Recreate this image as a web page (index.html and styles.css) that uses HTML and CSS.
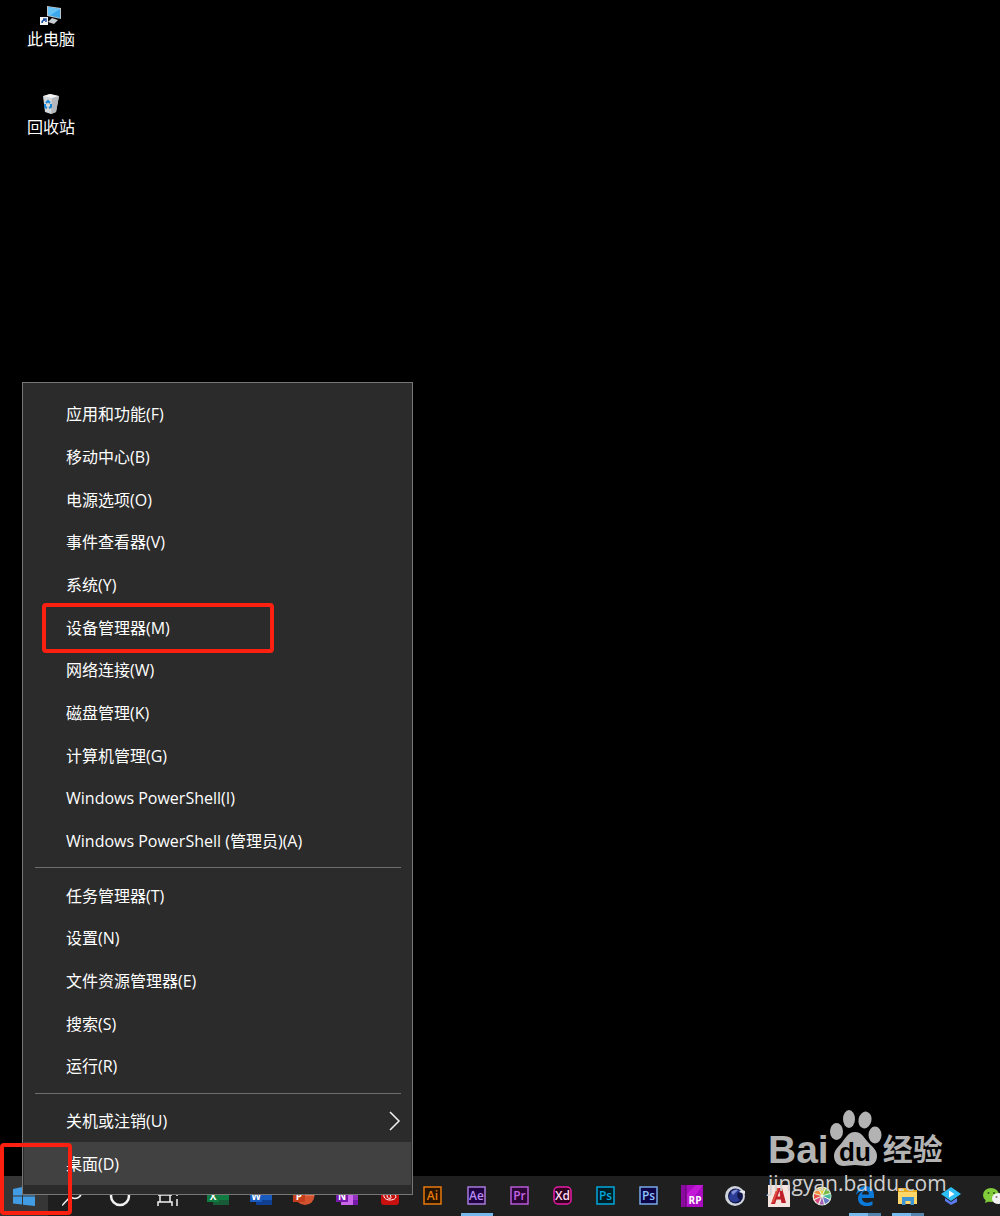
FILE: index.html
```html
<!DOCTYPE html>
<html lang="zh-CN">
<head>
  <meta charset="UTF-8" />
  <meta name="viewport" content="width=device-width, initial-scale=1.0"/>
  <title>桌面</title>
  <link rel="stylesheet" href="styles.css">
</head>
<body>

  <!-- Desktop -->
  <main class="desktop">
    <a class="shortcut" href="#">
      <svg width="22" height="22" viewBox="0 0 22 22">
        <path d="M7 1 L21 3 V14 L7 11Z" fill="#b9c4cb"/>
        <path d="M8 2 L20 4 V13 L8 10Z" fill="#3da9ec"/>
        <path d="M8 2 L20 4 L10 10.500 L8 10Z" fill="#67c3f8"/>
        <path d="M12 13 L18 15 L14 19 L8 17Z" fill="#c8ced1"/>
        <rect x="0" y="12" width="8" height="8" fill="#f4f4f4"/>
        <path d="M2 18 C2 16 3 15 5 15 M3 14 H6 V17" fill="none" stroke="#1c4f9c" stroke-width="1.500"/>
      </svg>
      <span>此电脑</span>
    </a>
    <a class="shortcut" href="#">
      <svg width="22" height="22" viewBox="0 0 22 22">
        <path d="M3 3 L10 1 L19 3 L16 19 L11 21 L5 19Z" fill="#d4d7da"/>
        <path d="M12 5 L19 3 L16 19 L11 21Z" fill="#b5b9bd"/>
        <path d="M4 3 L10 1 L18 3 L12 5Z" fill="#f3f4f5"/>
        <path d="M6 10 L8 8 L10 10 M11 11 V14 L9 15 M7 15 L5 14 V11" fill="none" stroke="#1b85d8" stroke-width="2"/>
      </svg>
      <span>回收站</span>
    </a>
  </main>

  <!-- Taskbar -->
  <nav class="taskbar">
    <div class="system">
      <button class="start" aria-label="开始">
        <svg width="22" height="20" viewBox="0 0 22 20"><path d="M0 3 L9 1 V9.500 H0Z M10 1 L22 0 V9.500 H10Z M0 10.500 H9 V18.500 L0 17.500Z M10 10.500 H22 V20 L10 18.700Z" fill="#429ce3"/></svg>
      </button>
      <button aria-label="搜索">
        <svg width="20" height="22" viewBox="0 0 20 22" fill="none" stroke="#f2f2f2" stroke-width="1.500"><circle cx="13" cy="7" r="6.500"/><path d="M8.500 11.500 L0 20.500"/></svg>
      </button>
      <button aria-label="Cortana">
        <svg width="22" height="22" viewBox="0 0 22 22"><circle cx="11" cy="11" r="9" fill="none" stroke="#f2f2f2" stroke-width="2.500"/></svg>
      </button>
      <button aria-label="任务视图">
        <svg width="22" height="22" viewBox="0 0 22 22" fill="none" stroke="#f2f2f2" stroke-width="1.500"><path d="M1 1 V5 H15 V1 M3 10 V17 M13 10 V17 M1 10 H15 M1 21 V17 H15 V21 M20 1 V11 M20 14 V21"/></svg>
      </button>
    </div>
    <div class="apps">
      <button aria-label="Excel">
        <svg width="22" height="20" viewBox="0 0 22 20"><path d="M6 0 H22 V19 H6Z" fill="#185c37"/><path d="M13 0 H22 V13 H6 V6 H13Z" fill="#21a366"/><path d="M6 8 H22 V14 H6Z" fill="#107c41"/><rect x="0" y="4" width="12" height="12" fill="#107c41"/><text x="6" y="14" class="office">X</text></svg>
      </button>
      <button aria-label="Word">
        <svg width="22" height="20" viewBox="0 0 22 20"><path d="M6 0 H22 V19 H6Z" fill="#103f91"/><path d="M6 0 H22 V8 H6Z" fill="#41a5ee"/><path d="M6 8 H22 V14 H6Z" fill="#185abd"/><rect x="0" y="4" width="12" height="12" fill="#185abd"/><text x="6" y="14" class="office">W</text></svg>
      </button>
      <button aria-label="PowerPoint">
        <svg width="22" height="20" viewBox="0 0 22 20"><circle cx="12" cy="9.500" r="9.500" fill="#d35230"/><path d="M12 0 A9.500 9.500 0 0 1 21.500 9.500 H12Z" fill="#ff8f6b"/><rect x="0" y="4" width="12" height="12" fill="#c43e1c"/><text x="6" y="14" class="office">P</text></svg>
      </button>
      <button aria-label="OneNote">
        <svg width="22" height="20" viewBox="0 0 22 20"><rect x="5" width="17" height="19" fill="#ca64ea"/><rect x="17" width="5" height="19" fill="#9332bf"/><rect x="17" y="14" width="5" height="5" fill="#7719aa"/><rect x="0" y="4" width="12" height="12" fill="#7719aa"/><text x="6" y="14" class="office">N</text></svg>
      </button>
      <button aria-label="网易云音乐">
        <svg width="18" height="18" viewBox="0 0 18 18"><rect width="18" height="18" rx="3" fill="#c8100f"/><path d="M12 2 C8 2 9 8 10 10 C11 12 6 12 6 9 C6 6 10 5 13 7 C17 10 14 13 9 13 C4 13 2 10 3 6" fill="none" stroke="#fff" stroke-width="1"/></svg>
      </button>
      <button aria-label="Illustrator">
        <svg class="adobe" width="20" height="20" viewBox="0 0 20 20" fill="#e87a0c"><rect x="1" y="1" width="17" height="17" fill="#261300" stroke="#e87a0c" stroke-width="1.500"/><text x="9.500" y="14">Ai</text></svg>
      </button>
      <button class="open" aria-label="After Effects">
        <svg class="adobe" width="20" height="20" viewBox="0 0 20 20" fill="#b98df2"><rect x="1" y="1" width="17" height="17" fill="#1f0040" stroke="#a77bda" stroke-width="1.500"/><text x="9.500" y="14">Ae</text></svg>
      </button>
      <button aria-label="Premiere">
        <svg class="adobe" width="20" height="20" viewBox="0 0 20 20" fill="#c565e3"><rect x="1" y="1" width="17" height="17" fill="#2a0634" stroke="#b95ad8" stroke-width="1.500"/><text x="9.500" y="14">Pr</text></svg>
      </button>
      <button aria-label="XD">
        <svg class="adobe" width="20" height="20" viewBox="0 0 20 20" fill="#ffd9f3"><rect x="1" y="1" width="17" height="17" rx="4" fill="#2e001e" stroke="#e81ba6" stroke-width="1.500"/><text x="9.500" y="14">Xd</text></svg>
      </button>
      <button aria-label="Photoshop">
        <svg class="adobe" width="20" height="20" viewBox="0 0 20 20" fill="#00a8dc"><rect x="1" y="1" width="17" height="17" fill="#001d26" stroke="#00a8dc" stroke-width="1.500"/><text x="9.500" y="14">Ps</text></svg>
      </button>
      <button aria-label="Photoshop CC">
        <svg class="adobe" width="20" height="20" viewBox="0 0 20 20" fill="#8cc0ff"><rect x="1" y="1" width="17" height="17" fill="#0c0446" stroke="#77a9e8" stroke-width="1.500"/><text x="9.500" y="14">Ps</text></svg>
      </button>
      <button aria-label="Axure RP">
        <svg width="22" height="22" viewBox="0 0 22 22"><rect width="22" height="22" fill="#a90cc0"/><rect width="5" height="22" fill="#8b0aa0"/><path d="M5 0 V22" stroke="#5a0669"/><path d="M6 9 L15 0 H22 L6 22Z" fill="#c119d6"/><text x="14" y="19" class="office">RP</text></svg>
      </button>
      <button aria-label="Cinema 4D">
        <svg width="22" height="22" viewBox="0 0 22 22"><circle cx="11" cy="11" r="10" fill="#cfd3dc"/><circle cx="11.500" cy="11" r="7.500" fill="#11154a"/><path d="M5 12 C6 6 12 3 17 6 C12 7 12 12 16 15 C12 19 5 17 5 12Z" fill="#2c3c94"/><path d="M7 7 C9 5 12 4 14 5 L9 10Z" fill="#7e8fd7"/><path d="M21 6 C19 5 17 5 15 7 C17 8 19 8 21 9Z" fill="#e8eaf0"/></svg>
      </button>
      <button aria-label="AutoCAD">
        <svg width="22" height="22" viewBox="0 0 22 22"><rect width="22" height="22" fill="#f6e4df"/><path d="M3 19 L9 3 H14 L18 18 H13.500 L12.800 14.500 H8.500 L7 19Z M9.500 11.500 H12.200 L11.500 6Z" fill="#bf1f26" fill-rule="evenodd"/><path d="M3 19 L9 3 L11 3 L6 17Z" fill="#e04a42"/></svg>
      </button>
      <button aria-label="图片">
        <svg width="20" height="20" viewBox="0 0 20 20"><circle cx="10" cy="10" r="9.500" fill="#eaf4df"/><path d="M10 9 L7 2 A8.500 8.500 0 0 1 13 2Z" fill="#e8d440"/><path d="M11 9 L14 2.500 A9 9 0 0 1 18 7Z" fill="#76b843"/><path d="M11 10 L18.500 8 A8 8 0 0 1 18 13Z" fill="#43b89a"/><path d="M11 11 L17.500 14 A8 8 0 0 1 13 18Z" fill="#6576c8"/><path d="M10 11 L12 18.500 H7.500Z" fill="#a75dba"/><path d="M9 11 L6 18 L2.500 14Z" fill="#dc4583"/><path d="M9 10 L2 13 V8Z" fill="#e74e45"/><path d="M9 9 L2 7 L6 2.500Z" fill="#f08d3b"/></svg>
      </button>
      <button class="open many" aria-label="Edge">
        <svg width="20" height="20" viewBox="0 0 20 20"><path d="M1 9 C2 3 6 0 10.500 0 C16 0 19 4 19 9 V12 H7 C7 17 13 18 17.500 15 V19 C11 22 3 19.500 3 12.500 C3 9 5 6.500 8 5 C5 5 3 6.500 1 9Z M7 8.500 H14 C14 3.500 7.500 3.500 7 8.500Z" fill="#0b79d9" fill-rule="evenodd"/></svg>
      </button>
      <button class="open many" aria-label="文件资源管理器">
        <svg width="20" height="18" viewBox="0 0 20 18"><path d="M0 1 H8 L10 3 H19 V17 H0Z" fill="#e8a91a"/><path d="M0 5 H19 V17 H0Z" fill="#ffd768"/><path d="M4 10 H16 V18 H12.500 V14 H7.500 V18 H4Z" fill="#3f94d4"/><rect x="1" y="2" width="5" height="2" fill="#fbe08c"/></svg>
      </button>
      <button aria-label="视频">
        <svg width="20" height="20" viewBox="0 0 20 20"><path d="M4 12 L10 16 L16 12 V16 L10 19 L4 15Z" fill="#5c7af0"/><path d="M10 1 L20 8 L10 15 L0 8Z" fill="#2cbef4"/><path d="M8 4.500 L13.500 8 L8 11.500Z" fill="#fff"/></svg>
      </button>
      <button aria-label="微信">
        <svg width="22" height="18" viewBox="0 0 22 18"><ellipse cx="8" cy="8" rx="8" ry="7" fill="#80cc3b"/><path d="M3 12 L2 16 L7 14Z" fill="#80cc3b"/><circle cx="5.500" cy="6" r="1" fill="#31541a"/><circle cx="11" cy="6" r="1" fill="#31541a"/><ellipse cx="15.500" cy="11.500" rx="6.500" ry="5.500" fill="#f2f2f2"/><circle cx="13.500" cy="10" r="1" fill="#777"/><circle cx="18" cy="10" r="1" fill="#777"/></svg>
      </button>
    </div>
  </nav>

  <!-- Start button context menu -->
  <div class="menu">
    <button>应用和功能(F)</button>
    <button>移动中心(B)</button>
    <button>电源选项(O)</button>
    <button>事件查看器(V)</button>
    <button>系统(Y)</button>
    <button class="marked">设备管理器(M)</button>
    <button>网络连接(W)</button>
    <button>磁盘管理(K)</button>
    <button>计算机管理(G)</button>
    <button>Windows PowerShell(I)</button>
    <button>Windows PowerShell (管理员)(A)</button>
    <hr>
    <button>任务管理器(T)</button>
    <button>设置(N)</button>
    <button>文件资源管理器(E)</button>
    <button>搜索(S)</button>
    <button>运行(R)</button>
    <hr>
    <button>关机或注销(U)
      <svg width="12" height="20" viewBox="0 0 12 20"><path d="M1 1 L10 10 L1 19" fill="none" stroke="#f2f2f2" stroke-width="1.500"/></svg>
    </button>
    <button class="active">桌面(D)</button>
  </div>

  <div class="start-mark"></div>

  <!-- Watermark -->
  <div class="watermark">
    <div class="brand">
      <span class="bai">Bai</span>
      <svg width="54" height="56" viewBox="0 0 54 56" fill="#b3b3b3">
        <ellipse cx="7.500" cy="21.500" rx="6.500" ry="8.500"/>
        <ellipse cx="20" cy="9" rx="6" ry="9"/>
        <ellipse cx="36" cy="10" rx="6.500" ry="8.500" transform="rotate(12 36 10)"/>
        <ellipse cx="46" cy="25" rx="6.500" ry="8.500"/>
        <path d="M26 22 C32 22 35 27 38 31 C42 36 48 39 48 46 C48 53 43 56 37 56 C33 56 30 55 26 55 C22 55 19 56 15 56 C8 56 5 51 5 46 C5 39 11 36 14 31 C17 27 20 22 26 22Z"/>
        <text class="du" x="26" y="51">du</text>
      </svg>
      <span class="jingyan">经验</span>
    </div>
    <span class="site">jingyan.baidu.com</span>
  </div>

</body>
</html>
```

FILE: styles.css
```css
*,
*::after {
  box-sizing: border-box;
}

body {
  position: relative;
  display: flex;
  flex-direction: column;
  min-height: 100vh;
  margin: 0;
  overflow: hidden;
  background: #000;
  color: #fff;
  font-family: "Open Sans", "Noto Sans CJK SC", sans-serif;
  font-size: 16px;
}

button {
  padding: 0;
  border: none;
  background: none;
  color: inherit;
  font: inherit;
}

.desktop {
  flex: 1;
  display: flex;
  flex-direction: column;
  align-items: flex-start;
  gap: 40px;
  padding: 5px 27px;
}

.shortcut {
  display: flex;
  flex-direction: column;
  align-items: center;
  height: 48px;
  color: #fff;
  line-height: 24px;
  text-decoration: none;
}

.taskbar {
  display: flex;
  height: 40px;
  overflow: hidden;
  background: #1f1f1f;
}

.taskbar button {
  display: flex;
  align-items: center;
  justify-content: center;
  height: 40px;
}

.system {
  display: flex;
}

.system button {
  width: 48px;
}

.taskbar .start {
  background: #363636;
}

/* the last app runs past the edge of the screen */
.apps {
  flex: 1;
  display: flex;
  margin-left: 4px;
  margin-right: -16px;
}

.apps button {
  position: relative;
  flex: 1;
}

.apps .open::after {
  content: "";
  position: absolute;
  bottom: 0;
  left: 50%;
  width: 32px;
  height: 3px;
  margin-left: -16px;
  background: #76b9ed;
}

.apps .many::after {
  background: linear-gradient(to right, #76b9ed 60%, #5484ac 60%);
}

.office {
  fill: #fff;
  font-size: 10px;
  font-weight: bold;
  text-anchor: middle;
}

.adobe text {
  font-size: 12px;
  font-weight: 600;
  text-anchor: middle;
}

.menu {
  position: absolute;
  top: 382px;
  bottom: 21px;
  left: 22px;
  display: flex;
  flex-direction: column;
  width: 391px;
  padding: 10px 1px 9px;
  border: 1px solid #767676;
  background: #2b2b2b;
}

.menu button {
  position: relative;
  flex: 1;
  display: flex;
  align-items: center;
  justify-content: space-between;
  padding: 0 10px 0 42px;
  line-height: 20px;
  text-align: left;
}

.menu button:hover,
.menu .active {
  background: #414141;
}

.menu hr {
  width: 366px;
  height: 1px;
  margin: 5px 11px 6px;
  border: none;
  background: #6e6e6e;
}

.menu .marked::after {
  content: "";
  position: absolute;
  top: -3px;
  bottom: -4px;
  left: 18px;
  width: 232px;
  border: 4px solid #fb2010;
  border-radius: 4px;
}

.start-mark {
  position: absolute;
  bottom: 1px;
  left: 0;
  width: 72px;
  height: 72px;
  border: 4px solid #fb2010;
  border-radius: 4px;
}

.watermark {
  position: absolute;
  right: 54px;
  bottom: 19px;
  display: flex;
  flex-direction: column;
  width: 178px;
  color: #b3b3b3;
}

.brand {
  display: flex;
  align-items: flex-end;
  height: 56px;
  margin-bottom: 3px;
}

.brand svg {
  flex-shrink: 0;
}

.bai {
  font-family: "Liberation Sans", sans-serif;
  font-size: 39px;
  font-weight: bold;
  line-height: 32px;
}

.du {
  fill: #000;
  font-family: "Liberation Sans", sans-serif;
  font-size: 26px;
  font-weight: bold;
  text-anchor: middle;
}

.jingyan {
  font-size: 30px;
  font-weight: bold;
  line-height: 34px;
}

.site {
  color: #d0d0d0;
  font-size: 21px;
  line-height: 28px;
}
```
